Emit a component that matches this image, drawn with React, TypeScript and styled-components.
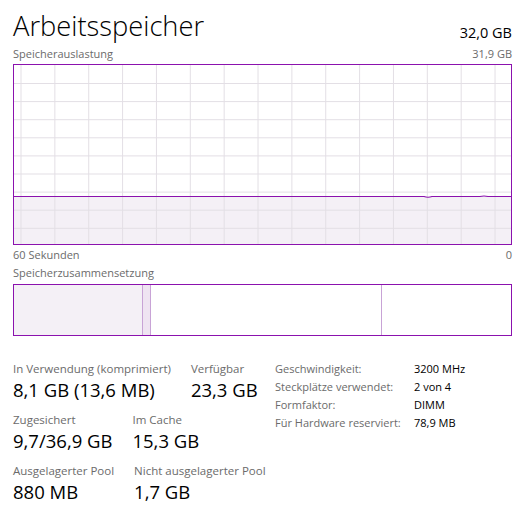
import { Fragment } from "react";
import styled, { createGlobalStyle } from "styled-components";

const GlobalStyle = createGlobalStyle`
  html, body {
    margin: 0;
    padding: 0;
    background: #ffffff;
  }
  body {
    font-family: "Open Sans", "Noto Sans", "Liberation Sans", sans-serif;
    color: #000000;
  }
`;

const PURPLE = "#8b12ae";

const Page = styled.div`
  width: 527px;
  height: 523px;
  box-sizing: border-box;
  padding: 6px 15px 0 13px;
  display: flex;
  flex-direction: column;
`;

const Header = styled.div`
  display: flex;
  justify-content: space-between;
  align-items: flex-end;
  height: 37px;
`;

const Title = styled.h1`
  margin: 0;
  font-weight: 300;
  font-size: 27.3px;
  line-height: 34px;
  color: #000;
`;

const Total = styled.div`
  font-size: 14.5px;
  line-height: 18px;
  margin-bottom: 1px;
  color: #000;
`;

const CaptionRow = styled.div<{ $top?: number }>`
  display: flex;
  justify-content: space-between;
  font-size: 11px;
  line-height: 14px;
  color: #6b6b6b;
  margin-top: ${(p) => p.$top ?? 0}px;
`;

const GraphBox = styled.div`
  height: 181px;
  box-sizing: border-box;
  border: 1px solid ${PURPLE};
  background: #ffffff;
  margin-top: 3px;
  overflow: hidden;

  svg {
    display: block;
  }
`;

const CompositionBar = styled.div`
  height: 52px;
  box-sizing: border-box;
  border: 1px solid ${PURPLE};
  margin-top: 4px;
  display: flex;
`;

const Segment = styled.div<{ $width: number; $fill: string; $edge?: boolean }>`
  width: ${(p) => p.$width}px;
  flex: ${(p) => (p.$width ? "none" : "1")};
  background: ${(p) => p.$fill};
  border-right: ${(p) => (p.$edge ? "1px solid #c8a3d6" : "none")};
`;

const Details = styled.div`
  display: flex;
  align-items: flex-start;
  margin-top: 25px;
`;

const StatsColumn = styled.div`
  width: 262px;
  display: flex;
  flex-direction: column;
  gap: 10px;
`;

const StatRow = styled.div`
  display: flex;
  gap: 20px;
`;

const Stat = styled.div`
  display: flex;
  flex-direction: column;
`;

const StatLabel = styled.div`
  font-size: 11.5px;
  line-height: 16px;
  color: #6b6b6b;
  white-space: nowrap;
`;

const StatValue = styled.div`
  font-size: 18.5px;
  line-height: 25px;
  color: #000;
  white-space: nowrap;
`;

const PropsGrid = styled.div`
  display: grid;
  grid-template-columns: 139px auto;
  grid-auto-rows: 18.1px;
  align-items: center;
  margin-top: -1px;
  font-size: 11px;
  line-height: 16px;
`;

const PropLabel = styled.div`
  color: #6b6b6b;
  white-space: nowrap;
`;

const PropValue = styled.div`
  color: #000;
  white-space: nowrap;
`;

function UsageChart() {
  const w = 497;
  const h = 179;
  const cols = Array.from({ length: 15 }, (_, i) => 7 + i * 33.86);
  const rows = Array.from({ length: 9 }, (_, i) => 18.5 + i * 18.1);
  const lineY = 131.5;
  const line = `M0 ${lineY} L410 ${lineY} Q414 ${lineY + 1.5} 418 ${lineY} L466 ${lineY} Q470 ${
    lineY - 1
  } 474 ${lineY} L${w} ${lineY}`;

  return (
    <svg width={w} height={h} viewBox={`0 0 ${w} ${h}`}>
      <path d={`${line} L${w} ${h} L0 ${h} Z`} fill="#f4f0f6" />
      {cols.map((x) => (
        <line key={`c${x}`} x1={x} y1={0} x2={x} y2={h} stroke="#e3dfe5" strokeWidth={1} />
      ))}
      {rows.map((y) => (
        <line key={`r${y}`} x1={0} y1={y} x2={w} y2={y} stroke="#e3dfe5" strokeWidth={1} />
      ))}
      <path d={line} fill="none" stroke={PURPLE} strokeWidth={1.2} />
    </svg>
  );
}

const stats = [
  [
    { label: "In Verwendung (komprimiert)", value: "8,1 GB (13,6 MB)" },
    { label: "Verfügbar", value: "23,3 GB" },
  ],
  [
    { label: "Zugesichert", value: "9,7/36,9 GB" },
    { label: "Im Cache", value: "15,3 GB" },
  ],
  [
    { label: "Ausgelagerter Pool", value: "880 MB" },
    { label: "Nicht ausgelagerter Pool", value: "1,7 GB" },
  ],
];

const properties = [
  ["Geschwindigkeit:", "3200 MHz"],
  ["Steckplätze verwendet:", "2 von 4"],
  ["Formfaktor:", "DIMM"],
  ["Für Hardware reserviert:", "78,9 MB"],
];

export default function App() {
  return (
    <>
      <GlobalStyle />
      <Page>
        <Header>
          <Title>Arbeitsspeicher</Title>
          <Total>32,0 GB</Total>
        </Header>
        <CaptionRow $top={4}>
          <span>Speicherauslastung</span>
          <span>31,9 GB</span>
        </CaptionRow>
        <GraphBox>
          <UsageChart />
        </GraphBox>
        <CaptionRow $top={3}>
          <span>60 Sekunden</span>
          <span>0</span>
        </CaptionRow>
        <CaptionRow $top={4}>
          <span>Speicherzusammensetzung</span>
        </CaptionRow>
        <CompositionBar>
          <Segment $width={128} $fill="#f4f0f6" $edge />
          <Segment $width={7} $fill="#efe4f2" $edge />
          <Segment $width={230} $fill="#ffffff" $edge />
          <Segment $width={0} $fill="#ffffff" />
        </CompositionBar>
        <Details>
          <StatsColumn>
            {stats.map((row, i) => (
              <StatRow key={i}>
                {row.map((s) => (
                  <Stat key={s.label}>
                    <StatLabel>{s.label}</StatLabel>
                    <StatValue>{s.value}</StatValue>
                  </Stat>
                ))}
              </StatRow>
            ))}
          </StatsColumn>
          <PropsGrid>
            {properties.map(([label, value]) => (
              <Fragment key={label}>
                <PropLabel>{label}</PropLabel>
                <PropValue>{value}</PropValue>
              </Fragment>
            ))}
          </PropsGrid>
        </Details>
      </Page>
    </>
  );
}
